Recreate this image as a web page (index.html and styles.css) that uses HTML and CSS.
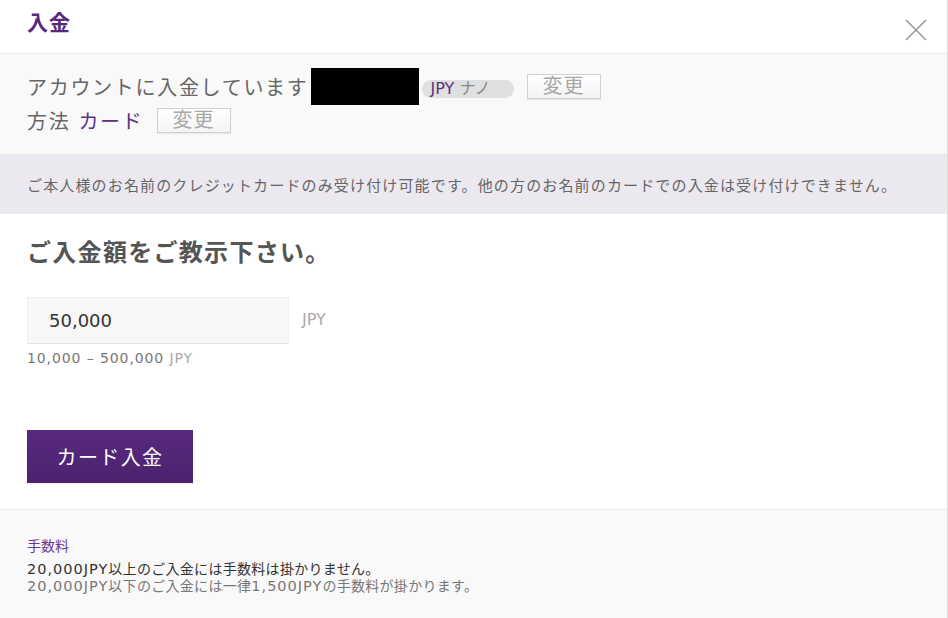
FILE: index.html
```html
<!DOCTYPE html>
<html lang="ja">
<head>
<meta charset="utf-8">
<title>入金</title>
<link rel="stylesheet" href="styles.css">
</head>
<body>
<div class="modal">
  <header class="head">
    <h1 class="title">入金</h1>
    <button class="close" aria-label="閉じる">
      <svg width="22" height="22" viewBox="0 0 22 22"><path d="M1 1L21 21M21 1L1 21" stroke="#9a9a9a" stroke-width="1.6" fill="none"/></svg>
    </button>
  </header>
  <section class="account">
    <div class="row row1">
      <span class="label">アカウントに入金しています</span>
      <span class="redact"></span>
      <span class="pill"><span class="cur">JPY</span> <span class="kind">ナノ</span></span>
      <button class="change">変更</button>
    </div>
    <div class="row row2">
      <span class="label">方法</span>
      <span class="method">カード</span>
      <button class="change">変更</button>
    </div>
  </section>
  <div class="notice">ご本人様のお名前のクレジットカードのみ受け付け可能です。他の方のお名前のカードでの入金は受け付けできません。</div>
  <main class="main">
    <h2 class="heading">ご入金額をご教示下さい。</h2>
    <div class="amount">
      <div class="input">50,000</div>
      <span class="unit">JPY</span>
    </div>
    <div class="range">10,000 – 500,000 <span class="unit-sm">JPY</span></div>
    <button class="submit">カード入金</button>
  </main>
  <footer class="fees">
    <div class="fees-title">手数料</div>
    <div class="fee1"><span class="lat">20,000JPY</span>以上のご入金には手数料は掛かりません。</div>
    <div class="fee2"><span class="lat">20,000JPY</span>以下のご入金には一律<span class="lat">1,500JPY</span>の手数料が掛かります。</div>
  </footer>
</div>
</body>
</html>
```

FILE: styles.css
```css
* { box-sizing: border-box; }
html, body { margin: 0; padding: 0; background: #fff; }
body {
  font-family: "DejaVu Sans", "Noto Sans CJK JP", sans-serif;
  color: #666;
}
.modal {
  width: 948px;
  height: 618px;
  border-right: 1px solid #dcdcdc;
  display: flex;
  flex-direction: column;
  overflow: hidden;
}
.head {
  height: 54px;
  border-bottom: 1px solid #ececec;
  display: flex;
  justify-content: space-between;
  align-items: flex-start;
  padding: 0 20px 0 27px;
}
.title {
  margin: 0;
  padding-top: 8px;
  font-size: 21px;
  line-height: 30px;
  letter-spacing: 1px;
  font-weight: bold;
  color: #56297c;
}
.close {
  margin-top: 19px;
  background: none;
  border: 0;
  padding: 0;
  width: 22px;
  height: 22px;
  display: block;
}
.close svg { display: block; }
.account {
  background: #f9f9f9;
  border-bottom: 1px solid #e6e6e6;
  height: 101px;
  padding: 14px 0 0 27px;
}
.row {
  display: flex;
  align-items: center;
}
.row1 { height: 37px; }
.row2 { height: 30px; }
.label {
  font-size: 20px;
  letter-spacing: 1.7px;
  color: #666;
}
.redact {
  width: 108px;
  height: 37px;
  background: #000;
  margin-left: 2px;
}
.pill {
  margin-left: 3px;
  margin-top: 4px;
  width: 92px;
  height: 18px;
  border-radius: 9px;
  background: #e0e0e0;
  font-size: 16px;
  line-height: 18px;
  padding-left: 9px;
  white-space: nowrap;
}
.cur { color: #5e3188; }
.kind { color: #888; }
.change {
  margin-left: 13px;
  width: 74px;
  height: 25px;
  background: linear-gradient(#ffffff, #f4f4f4);
  border: 1px solid #d0d0d0;
  box-shadow: 0 1px 1px rgba(0,0,0,0.06);
  font-family: inherit;
  font-size: 20px;
  line-height: 21px;
  letter-spacing: 1px;
  color: #a8a8a8;
  padding: 0;
  border-radius: 0;
}
.row2 .method {
  margin-left: 8px;
  font-size: 20px;
  letter-spacing: 1.7px;
  color: #5e3188;
}
.row2 .change { margin-left: 13px; }
.notice {
  height: 59px;
  background: #ece8ef;
  padding: 0 0 0 27px;
  display: flex;
  align-items: center;
  font-size: 15px;
  letter-spacing: 1.15px;
  color: #666;
  white-space: nowrap;
}
.main {
  padding: 23px 0 0 27px;
  height: 296px;
  border-bottom: 1px solid #ececec;
}
.heading {
  margin: 0;
  font-size: 24px;
  line-height: 32px;
  font-weight: bold;
  color: #555;
  letter-spacing: 1.3px;
}
.amount {
  margin-top: 28px;
  display: flex;
  align-items: center;
}
.input {
  width: 262px;
  height: 47px;
  background: #f7f7f7;
  border: 1px solid #f0f0f0;
  border-bottom-color: #e4e4e4;
  padding-left: 21px;
  font-size: 18px;
  line-height: 45px;
  color: #333;
}
.unit {
  margin-left: 13px;
  margin-top: -2px;
  font-size: 16px;
  color: #aaa;
}
.range {
  margin-top: 3px;
  font-size: 14px;
  line-height: 22px;
  color: #777;
  letter-spacing: 0.9px;
}
.unit-sm { color: #aaa; }
.submit {
  margin-top: 61px;
  width: 166px;
  height: 53px;
  border: 0;
  background: linear-gradient(#58297e, #4c226e);
  box-shadow: 0 1px 2px rgba(0,0,0,0.08);
  color: #fff;
  font-family: inherit;
  font-size: 20px;
  letter-spacing: 1.4px;
  padding: 0;
  display: block;
}
.fees {
  flex: 1;
  background: #f9f9f9;
  padding: 28px 0 0 27px;
  font-size: 14px;
  line-height: 17px;
}
.fees-title {
  color: #6a3a92;
  margin-bottom: 6px;
}
.fee1 { color: #333; letter-spacing: 0.3px; }
.fee2 { color: #777; letter-spacing: 0.3px; }
.lat {
  font-size: 14.5px;
  letter-spacing: 1px;
}
```
